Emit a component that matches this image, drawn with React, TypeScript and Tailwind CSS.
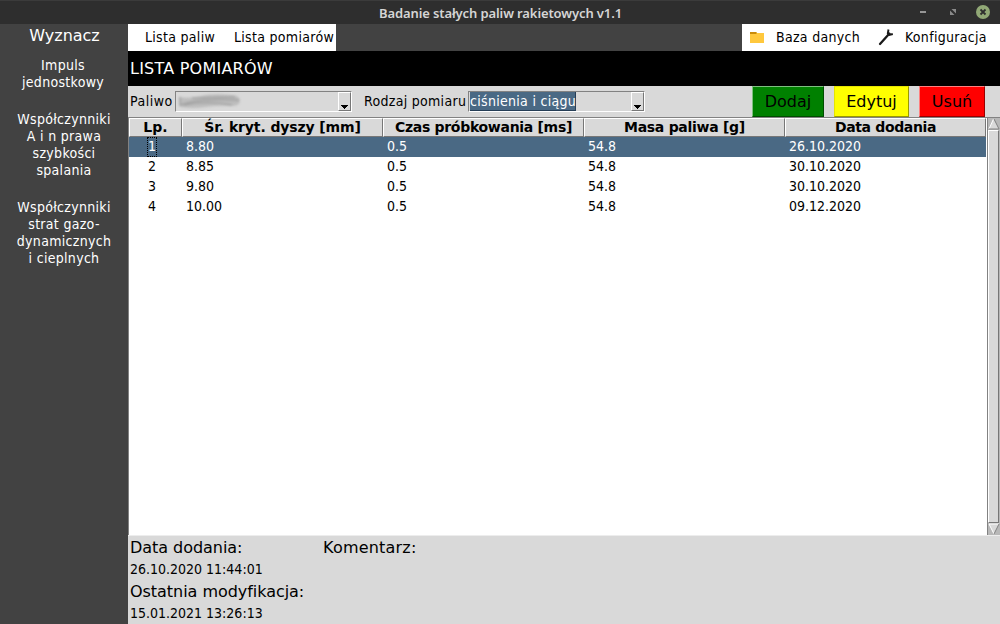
import React from 'react';

const rows = [
  ['1', '8.80', '0.5', '54.8', '26.10.2020'],
  ['2', '8.85', '0.5', '54.8', '30.10.2020'],
  ['3', '9.80', '0.5', '54.8', '30.10.2020'],
  ['4', '10.00', '0.5', '54.8', '09.12.2020'],
];

const columns = [
  { label: 'Lp.', spacing: 'tracking-[0.1px]' },
  { label: 'Śr. kryt. dyszy [mm]', spacing: 'tracking-[-0.12px]' },
  { label: 'Czas próbkowania [ms]', spacing: 'tracking-[-0.3px]' },
  { label: 'Masa paliwa [g]', spacing: 'tracking-[-0.28px]' },
  { label: 'Data dodania', spacing: 'tracking-[-0.35px]' },
];

const condensed = "font-['DejaVu_Sans_Condensed','DejaVu_Sans',sans-serif]";

const gridCols = 'grid grid-cols-[53px_201px_201px_201px_201px]';

function TitleBar() {
  return (
    <header className="flex h-6 shrink-0 border-t border-[#3b3b3b] bg-[#2e2e2e]">
      <div className="w-[128px]" />
      <div className="flex-1 pt-[2px] pl-px text-center font-['Noto_Sans'] text-[13px] leading-[20px] font-semibold tracking-[-0.11px] text-[#d5d5d5]">
        Badanie stałych paliw rakietowych v1.1
      </div>
      <svg className="w-[128px]" width="128" height="23" viewBox="872 1 128 23">
        <rect x="920" y="11" width="6" height="2" fill="#969696" />
        <path d="M951.5 9H956v4.5zM950 10.5v4.5h4.5z" fill="#8a8a8a" />
        <circle cx="983" cy="12" r="7" fill="#91a876" />
        <path d="M980.5 9.5l5 5M985.5 9.5l-5 5" stroke="#2e2e2e" strokeWidth="1.8" />
      </svg>
    </header>
  );
}

function Sidebar() {
  return (
    <aside className={'flex w-[128px] shrink-0 flex-col bg-[#424242] text-center text-[14px] leading-[17px] tracking-[0.3px] text-white ' + condensed}>
      <h2 className="mt-[2px] pl-px font-['DejaVu_Sans'] text-[16px] leading-[20px] tracking-normal">Wyznacz</h2>
      <p className="mt-[11px] pr-[2px]">Impuls<br />jednostkowy</p>
      <p className="mt-[20px]">Współczynniki<br />A i n prawa<br />szybkości<br />spalania</p>
      <p className="mt-[20px]">Współczynniki<br />strat gazo-<br />dynamicznych<br />i cieplnych</p>
    </aside>
  );
}

function MenuBar() {
  return (
    <nav className={'flex h-[27px] shrink-0 justify-between bg-[#424242] text-[14px] leading-[26px] tracking-[0.3px] whitespace-nowrap text-black ' + condensed}>
      <div className="flex w-[208px] bg-white pl-[17px]">
        <span className="w-[89px]">Lista paliw</span>
        <span>Lista pomiarów</span>
      </div>
      <div className="flex w-[258px] bg-white pl-2">
        <svg width="26" height="27" viewBox="750 24 26 27">
          <path d="M750 32h6l1 1h7v10h-14z" fill="#ffc83d" />
          <path d="M750 32h6l1 1-1 1h-6z" fill="#c98b0b" />
        </svg>
        <span className="w-[101px]">Baza danych</span>
        <svg width="28" height="27" viewBox="877 24 28 27">
          <path d="M880 44l9-10" stroke="#1a1a1a" strokeWidth="2.3" strokeLinecap="round" />
          <path d="M888.5 29.5l-.7 4 1.5 1.5 3.5-1M888.2 34.7l2-1.8" stroke="#1a1a1a" strokeWidth="1.9" fill="none" />
        </svg>
        <span>Konfiguracja</span>
      </div>
    </nav>
  );
}

function Combo({ children }: { children?: React.ReactNode }) {
  return (
    <div className="mt-[5px] flex h-[21px] w-[177px] border-t border-r border-b border-l border-t-[#828282] border-r-white border-b-white border-l-[#828282]">
      <div className="flex flex-1 pl-px">{children}</div>
      <div className="flex h-[19px] w-[13px] border border-t-white border-r-[#777] border-b-[#777] border-l-white bg-[#d9d9d9]">
        <svg width="11" height="17" viewBox="1 0 11 17"><path d="M3 12h7v1h-1v1h-1v1h-1v1h-1v-1h-1v-1h-1v-1h-1z" fill="#000" /></svg>
      </div>
    </div>
  );
}

function Filters() {
  return (
    <div className={'flex h-[31px] shrink-0 bg-[#d9d9d9] pl-[2px] text-[14px] leading-[31px] tracking-[0.3px] whitespace-nowrap text-black ' + condensed}>
      <label className="w-[45px] tracking-[0.5px]">Paliwo</label>
      <Combo>
        <svg width="66" height="19" viewBox="176 92 66 19">
          <g className="blur-[1px]">
            <path d="M178 97Q189 99 200 96T230 95Q239 95 239 101Q239 106 230 106Q218 105 205 107T179 107z" fill="#bdbdbd" />
            <path d="M179 97v8q12-4 25-5t34 0M183 105q22-5 48 0M191 98l43-1" stroke="#a3a3a3" strokeWidth="1.5" fill="none" />
          </g>
        </svg>
      </Combo>
      <label className="ml-[12px] w-[104px]">Rodzaj pomiaru</label>
      <Combo>
        <span className="h-[19px] w-[106px] border-r border-b border-[#263e56] bg-[#4a6984] leading-[18px] text-white">ciśnienia i ciągu</span>
      </Combo>
      <div className="ml-[107px] flex gap-[10px] text-center font-['DejaVu_Sans'] text-[16px] leading-[29px] tracking-normal">
        <button className="w-[72px] border border-t-[#7fbf7f] border-r-[#004d00] border-b-[#004d00] border-l-[#7fbf7f] bg-[#008000]">Dodaj</button>
        <button className="w-[75px] border border-t-[#e5e500] border-r-[#999900] border-b-[#999900] border-l-[#e5e500] bg-[#ffff00]">Edytuj</button>
        <button className="w-[66px] border border-t-[#ff7f7f] border-r-[#990000] border-b-[#990000] border-l-[#ff7f7f] bg-[#ff0000]">Usuń</button>
      </div>
    </div>
  );
}

function ScrollBar() {
  return (
    <div className="flex h-[418px] w-[13px] flex-col border-t border-l border-[#828282] bg-[#b8b8b8]">
      <svg width="12" height="12" viewBox="0 0 12 12">
        <path d="M5.5 1L1 11h10z" fill="#d9d9d9" />
        <path d="M5.5 1L1 11" stroke="#fff" />
        <path d="M6 1l5 10H1" stroke="#828282" fill="none" />
      </svg>
      <div className="h-[393px] w-[11px] border border-t-white border-r-[#777] border-b-[#777] border-l-white bg-[#d9d9d9]" />
      <svg width="12" height="12" viewBox="0 0 12 12">
        <path d="M1 1h10L6 11z" fill="#d9d9d9" />
        <path d="M11 1H1l5 10" stroke="#fff" fill="none" />
        <path d="M11 1L6 11" stroke="#828282" />
      </svg>
    </div>
  );
}

function Measurements() {
  return (
    <div className="flex h-[419px] shrink-0 border-b border-[#ededed] bg-white">
      <div className="w-[859px] border-t border-l border-[#828282]">
        <div className={gridCols + ' h-[19px] w-[857px] text-[14px] font-bold'}>
          {columns.map((c) => (
            <div key={c.label} className={'border border-t-white border-r-[#777] border-b-[#777] border-l-white bg-[#d9d9d9] text-center leading-[17px] whitespace-nowrap ' + c.spacing}>
              {c.label}
            </div>
          ))}
        </div>
        {rows.map((r, i) => (
          <div key={r[0]} className={gridCols + ' h-5 w-[857px] text-[14px] leading-[19px] ' + condensed + (i === 0 ? ' bg-[#4a6984] text-white' : ' text-black')}>
            {r.map((cell, j) =>
              j === 0 ? (
                <div key={j} className="flex pl-[18px]">
                  <span className={'h-5 w-[10px] border text-center leading-[17px] ' + (i === 0 ? 'border-dotted border-black' : 'border-transparent')}>{cell}</span>
                </div>
              ) : (
                <div key={j} className="pl-1">{cell}</div>
              ),
            )}
          </div>
        ))}
      </div>
      <ScrollBar />
    </div>
  );
}

function Details() {
  return (
    <footer className="flex flex-1 bg-[#d9d9d9] pt-px pl-[2px] text-black">
      <dl className="w-[193px]">
        <dt className="h-[22px] text-[16px] leading-[22px] tracking-[-0.04px]">Data dodania:</dt>
        <dd className={'h-[22px] text-[14px] leading-[20px] ' + condensed}>26.10.2020 11:44:01</dd>
        <dt className="h-[22px] text-[16px] leading-[22px] tracking-[-0.04px]">Ostatnia modyfikacja:</dt>
        <dd className={'h-[22px] text-[14px] leading-[20px] ' + condensed}>15.01.2021 13:26:13</dd>
      </dl>
      <span className="text-[16px] leading-[22px] tracking-[0.2px]">Komentarz:</span>
    </footer>
  );
}

export default function App() {
  return (
    <div className="flex h-[624px] w-[1000px] flex-col overflow-hidden bg-[#d9d9d9] font-['DejaVu_Sans',sans-serif]">
      <TitleBar />
      <div className="flex flex-1">
        <Sidebar />
        <main className="flex w-[872px] flex-col">
          <MenuBar />
          <h1 className="h-[35px] shrink-0 bg-black pl-[2px] text-[16px] leading-[35px] tracking-[0.23px] text-white">LISTA POMIARÓW</h1>
          <Filters />
          <Measurements />
          <Details />
        </main>
      </div>
    </div>
  );
}
